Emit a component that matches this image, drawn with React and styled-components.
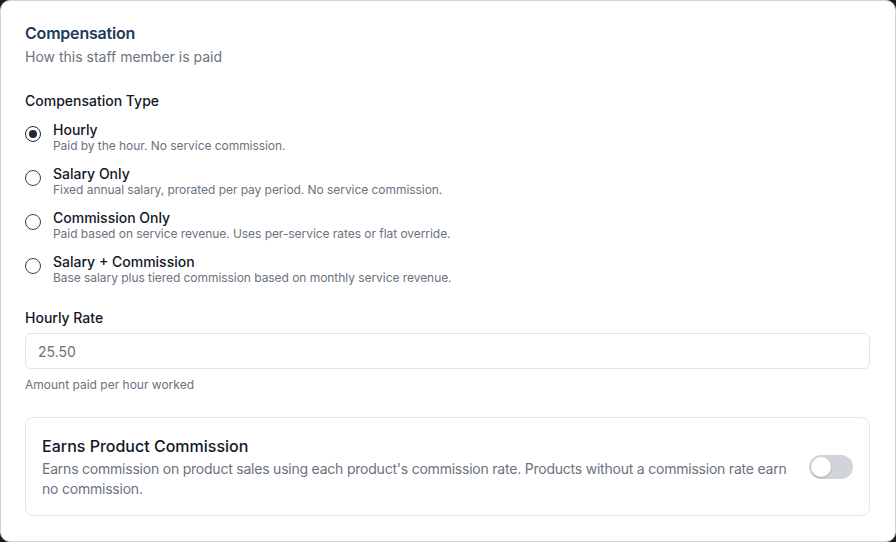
import React, { useState } from 'react'
import styled, { createGlobalStyle } from 'styled-components'

const Global = createGlobalStyle`
  html, body { margin: 0; padding: 0; background: #1c1c1c; }
  body { font-family: Inter, "Noto Sans", sans-serif; -webkit-font-smoothing: antialiased; }
  * { box-sizing: border-box; }
`

const Card = styled.div`
  width: 896px;
  height: 542px;
  background: #ffffff;
  border: 1px solid #d4d4d8;
  border-radius: 10px;
  padding: 20px 25px 0 24px;
  overflow: hidden;
`

const Title = styled.h2`
  margin: 0;
  font-size: 16px;
  line-height: 24px;
  font-weight: 600;
  letter-spacing: -0.2px;
  color: #1e3a5c;
`

const Subtitle = styled.p`
  margin: 2px 0 0;
  font-size: 14px;
  line-height: 20px;
  color: #6b7280;
`

const Label = styled.div`
  margin-top: ${p => p.$top || 0}px;
  font-size: 14px;
  line-height: 20px;
  font-weight: 500;
  color: #111827;
`

const RadioList = styled.div`
  margin-top: 10px;
  display: flex;
  flex-direction: column;
  gap: 12px;
`

const RadioRow = styled.label`
  display: flex;
  align-items: flex-start;
  gap: 12px;
  cursor: pointer;
`

const Circle = styled.span`
  flex: none;
  width: 16px;
  height: 16px;
  margin-top: 5px;
  border-radius: 50%;
  border: 1px solid ${p => (p.$checked ? '#1f2937' : '#3f3f46')};
  display: flex;
  align-items: center;
  justify-content: center;
  &::after {
    content: '';
    width: 8px;
    height: 8px;
    border-radius: 50%;
    background: #1f2937;
    display: ${p => (p.$checked ? 'block' : 'none')};
  }
`

const OptionText = styled.div`
  display: flex;
  flex-direction: column;
`

const OptionTitle = styled.span`
  font-size: 14px;
  line-height: 18px;
  font-weight: 500;
  color: #111827;
`

const OptionDesc = styled.span`
  font-size: 12px;
  line-height: 14px;
  letter-spacing: -0.05px;
  color: #6b7280;
`

const Input = styled.input`
  display: block;
  width: 100%;
  height: 36px;
  margin-top: 5px;
  padding: 0 12px;
  border: 1px solid #e4e4e7;
  border-radius: 6px;
  font-family: inherit;
  font-size: 14px;
  color: #6b7280;
  outline: none;
`

const Help = styled.p`
  margin: 8px 0 0;
  font-size: 12px;
  line-height: 16px;
  color: #6b7280;
`

const Panel = styled.div`
  margin-top: 24px;
  border: 1px solid #e5e7eb;
  border-radius: 8px;
  padding: 16px;
  display: flex;
  align-items: center;
  gap: 12px;
`

const PanelText = styled.div`
  flex: 1;
`

const PanelTitle = styled.div`
  font-size: 16px;
  line-height: 24px;
  font-weight: 500;
  color: #111827;
`

const PanelDesc = styled.p`
  margin: 1px 0 0;
  font-size: 14px;
  line-height: 20px;
  letter-spacing: -0.22px;
  color: #6b7280;
`

const Switch = styled.button`
  flex: none;
  width: 44px;
  height: 24px;
  padding: 2px;
  border: none;
  border-radius: 12px;
  background: ${p => (p.$on ? '#1e3a5c' : '#d1d5db')};
  display: flex;
  justify-content: ${p => (p.$on ? 'flex-end' : 'flex-start')};
  cursor: pointer;
  &::after {
    content: '';
    width: 20px;
    height: 20px;
    border-radius: 50%;
    background: #ffffff;
    box-shadow: 0 1px 2px rgba(0, 0, 0, 0.2);
  }
`

const options = [
  { id: 'hourly', title: 'Hourly', desc: 'Paid by the hour. No service commission.' },
  { id: 'salary', title: 'Salary Only', desc: 'Fixed annual salary, prorated per pay period. No service commission.' },
  { id: 'commission', title: 'Commission Only', desc: 'Paid based on service revenue. Uses per-service rates or flat override.' },
  { id: 'both', title: 'Salary + Commission', desc: 'Base salary plus tiered commission based on monthly service revenue.' },
]

export default function App() {
  const [type, setType] = useState('hourly')
  const [rate, setRate] = useState('25.50')
  const [product, setProduct] = useState(false)

  return (
    <>
      <Global />
      <Card>
        <Title>Compensation</Title>
        <Subtitle>How this staff member is paid</Subtitle>

        <Label $top={24}>Compensation Type</Label>
        <RadioList>
          {options.map(o => (
            <RadioRow key={o.id} onClick={() => setType(o.id)}>
              <Circle $checked={type === o.id} />
              <OptionText>
                <OptionTitle>{o.title}</OptionTitle>
                <OptionDesc>{o.desc}</OptionDesc>
              </OptionText>
            </RadioRow>
          ))}
        </RadioList>

        <Label $top={23}>Hourly Rate</Label>
        <Input value={rate} onChange={e => setRate(e.target.value)} />
        <Help>Amount paid per hour worked</Help>

        <Panel>
          <PanelText>
            <PanelTitle>Earns Product Commission</PanelTitle>
            <PanelDesc>
              Earns commission on product sales using each product's commission rate. Products without a commission rate earn no commission.
            </PanelDesc>
          </PanelText>
          <Switch $on={product} onClick={() => setProduct(!product)} />
        </Panel>
      </Card>
    </>
  )
}
